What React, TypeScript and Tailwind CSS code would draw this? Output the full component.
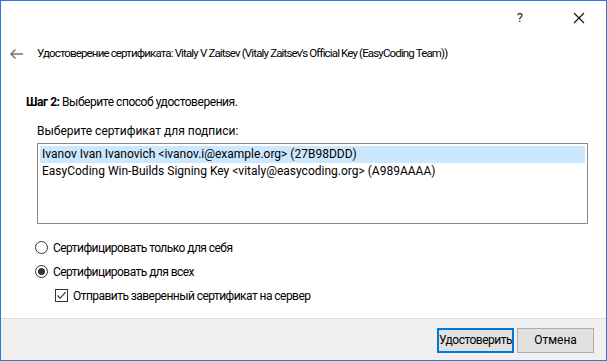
import React from "react";

const font = { fontFamily: 'Roboto, "Liberation Sans", sans-serif' };

function Radio({ checked }: { checked?: boolean }) {
  return (
    <span className="w-[13px] h-[13px] rounded-full border border-[#333] bg-white flex items-center justify-center">
      {checked && <span className="w-[7px] h-[7px] rounded-full bg-[#333]" />}
    </span>
  );
}

export default function App() {
  return (
    <div
      className="w-[607px] h-[361px] border border-[#2b7bd2] bg-white flex flex-col text-[12px] text-black overflow-hidden"
      style={font}
    >
      {/* Title bar */}
      <div className="h-[34px] flex items-center justify-end pr-[16px] gap-[50px]">
        <span className="text-[13px] text-[#222]">?</span>
        <svg width="12" height="12" viewBox="0 0 12 12" className="mr-[5px]">
          <path d="M1 1 L11 11 M11 1 L1 11" stroke="#111" strokeWidth="1.1" />
        </svg>
      </div>

      {/* Header */}
      <div className="h-[38px] flex items-center pl-[8px]">
        <svg width="15" height="12" viewBox="0 0 15 12" className="mr-[13px]">
          <path d="M14 6 H2 M6.5 1.5 L2 6 L6.5 10.5" stroke="#777" strokeWidth="1.5" fill="none" />
        </svg>
        <span className="text-[11.5px] tracking-[-0.85px]">
          Удостоверение сертификата: Vitaly V Zaitsev (Vitaly Zaitsev's Official Key (EasyCoding Team))
        </span>
      </div>

      {/* Content */}
      <div className="flex-1 pl-[25px] pr-[18px] pt-[20px]">
        <div className="tracking-[-0.45px]">
          <b className="font-bold">Шаг 2:</b> Выберите способ удостоверения.
        </div>
        <div className="pl-[11px] mt-[11px]">
          <div className="mb-[3px]">Выберите сертификат для подписи:</div>
          <div className="h-[81px] border border-[#8a8a8a] p-[2px]">
            <div className="bg-[#cce8ff] h-[17px] leading-[17px] pl-[2px]">
              Ivanov Ivan Ivanovich &lt;ivanov.i@example.org&gt; (27B98DDD)
            </div>
            <div className="h-[17px] leading-[17px] pl-[2px]">
              EasyCoding Win-Builds Signing Key &lt;vitaly@easycoding.org&gt; (A989AAAA)
            </div>
          </div>
        </div>

        <div className="mt-[15px] pl-[9px] flex flex-col gap-[7px] tracking-[-0.55px]">
          <label className="flex items-center gap-[5px] h-[17px]">
            <Radio /> Сертифицировать только для себя
          </label>
          <label className="flex items-center gap-[5px] h-[17px]">
            <Radio checked /> Сертифицировать для всех
          </label>
          <label className="flex items-center gap-[5px] h-[17px] pl-[20px]">
            <span className="w-[13px] h-[13px] border border-[#333] bg-white flex items-center justify-center">
              <svg width="11" height="11" viewBox="0 0 11 11">
                <path d="M1.5 5.5 L4.2 8.3 L9.5 2.2" stroke="#222" strokeWidth="1.1" fill="none" />
              </svg>
            </span>
            Отправить заверенный сертификат на сервер
          </label>
        </div>
      </div>

      {/* Footer */}
      <div className="h-[42px] border-t border-[#dfdfdf] bg-[#f0f0f0] flex items-center justify-end gap-[3px] pr-[12px] pt-[1px]">
        <button className="w-[77px] h-[25px] border-2 border-[#0078d7] bg-[#e1e1e1] text-[12px] tracking-[-0.5px]">
          Удостоверить
        </button>
        <button className="w-[77px] h-[25px] border border-[#adadad] bg-[#e1e1e1] text-[12px]">
          Отмена
        </button>
      </div>
    </div>
  );
}
